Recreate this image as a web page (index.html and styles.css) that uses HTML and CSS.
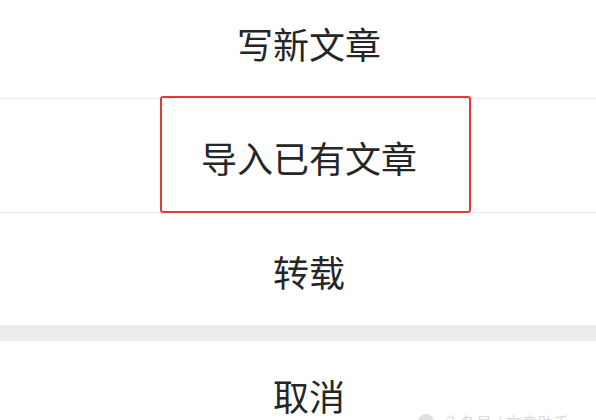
FILE: index.html
```html
<!DOCTYPE html>
<html lang="zh-CN">

<head>
    <meta charset="UTF-8">
    <meta name="viewport" content="width=device-width, initial-scale=1.0">
    <title>文章菜单</title>
    <link rel="stylesheet" href="styles.css">
</head>

<body>
    <div class="sheet">
        <div class="item item-first">写新文章</div>
        <div class="item item-marked">
            导入已有文章
            <span class="mark"></span>
        </div>
        <div class="item item-last">转载</div>
        <div class="gap"></div>
        <div class="item item-cancel">取消</div>
    </div>

    <div class="watermark">
        <span class="wm-dot"></span>
        <span class="wm-text">头条号 / 文章助手</span>
    </div>
</body>

</html>
```

FILE: styles.css
```css
* {
    padding: 0;
    margin: 0;
    box-sizing: border-box;
    font-family: "Noto Sans CJK SC", "Noto Sans", sans-serif;
}

html,
body {
    width: 596px;
    height: 420px;
    overflow: hidden;
    background: #ffffff;
}

.sheet {
    position: relative;
    display: flex;
    flex-direction: column;
}

.item {
    position: relative;
    display: flex;
    align-items: center;
    justify-content: center;
    height: 114px;
    padding: 3px 0 0 22px;
    border-bottom: 1px solid #ececec;
    font-size: 36px;
    color: #262626;
}

.item-first {
    margin-top: -15px;
}

.item-last {
    height: 112px;
    border-bottom: none;
}

.item-cancel {
    height: 108px;
    padding-top: 0;
    border-bottom: none;
}

.gap {
    height: 16px;
    background: #ededed;
}

.mark {
    position: absolute;
    top: -3px;
    left: 160px;
    width: 311px;
    height: 117px;
    border: 2px solid #e23b36;
    border-radius: 3px;
}

.watermark {
    position: absolute;
    left: 418px;
    top: 414px;
    display: flex;
    align-items: center;
    gap: 10px;
    opacity: 0.3;
}

.wm-dot {
    width: 16px;
    height: 16px;
    border-radius: 50%;
    background: #9a9a9a;
}

.wm-text {
    font-size: 16px;
    line-height: 16px;
    color: #8a8a8a;
    white-space: nowrap;
}
```
